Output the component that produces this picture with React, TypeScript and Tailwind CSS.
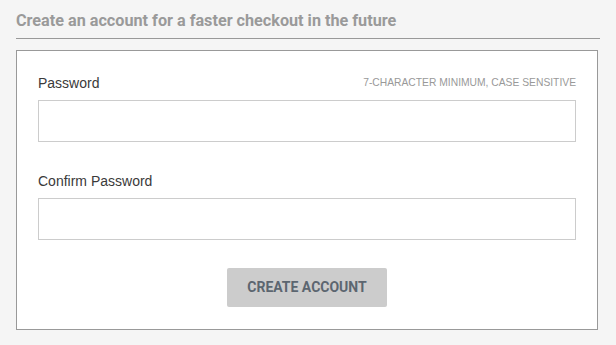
export default function App() {
  return (
    <div className="min-h-[345px] w-full bg-[#f5f5f5] px-4 pt-[11px] pb-4">
      <h2
        className="text-[16.2px] font-bold leading-[20px] text-[#9a9a9a] pb-[7px] border-b border-[#999]"
        style={{ fontFamily: "Roboto, sans-serif" }}
      >
        Create an account for a faster checkout in the future
      </h2>

      <div
        className="mt-[11px] w-[582px] border border-[#999] bg-white px-[21px] pt-[23px] pb-[22px]"
        style={{ fontFamily: "'Liberation Sans', Arial, sans-serif" }}
      >
        <div className="flex items-end justify-between">
          <label className="text-[14px] leading-[18px] text-[#3a3a3a]">Password</label>
          <span className="text-[10.3px] leading-[18px] uppercase text-[#999]">
            7-character minimum, case sensitive
          </span>
        </div>
        <input
          type="password"
          className="mt-[8px] block h-[42px] w-full border border-[#ccc] bg-white outline-none"
        />

        <label className="mt-[30px] block text-[14px] leading-[18px] text-[#3a3a3a]">
          Confirm Password
        </label>
        <input
          type="password"
          className="mt-[8px] block h-[42px] w-full border border-[#ccc] bg-white outline-none"
        />

        <div className="mt-[28px] flex justify-center">
          <button
            className="h-[39px] w-[160px] rounded-[2px] bg-[#cccccc] text-[14px] font-bold uppercase text-[#5c6670]"
            style={{ fontFamily: "Roboto, sans-serif" }}
          >
            Create Account
          </button>
        </div>
      </div>
    </div>
  );
}
